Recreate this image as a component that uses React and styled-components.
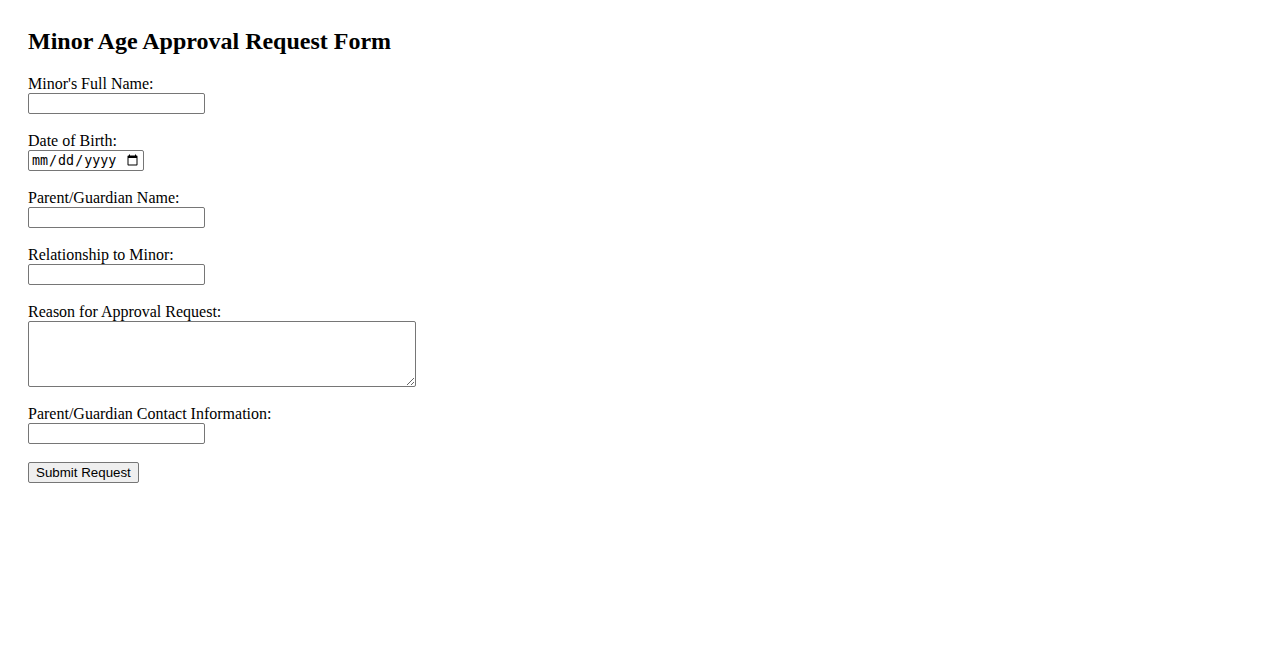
import React from "react"
import styled, { createGlobalStyle } from "styled-components"

const GlobalStyle = createGlobalStyle`
    body {
        margin: 0;
        background: #fff;
        color: #000;
        font-family: "Liberation Serif", "Times New Roman", serif;
        font-size: 16px;
    }
`

const Page = styled.div`
    padding: 28px 28px;
`

const Title = styled.h2`
    margin: 0 0 19px;
    font-size: 24px;
    font-weight: bold;
    line-height: 27.6px;
`

const Form = styled.form`
    display: flex;
    flex-direction: column;
    align-items: flex-start;
`

const Field = styled.div`
    display: flex;
    flex-direction: column;
    align-items: flex-start;
    margin-bottom: 17.6px;
`

const Label = styled.label`
    display: block;
    line-height: 18.4px;
`

const TextInput = styled.input`
    box-sizing: border-box;
    width: ${(p) => p.$width || 177}px;
    height: 21px;
    margin: 0;
    padding: 1px 2px;
    border: 1px solid #767676;
    border-radius: 2px;
    background: #fff;
    font-size: 13.33px;
`

const TextArea = styled.textarea`
    box-sizing: border-box;
    width: 388px;
    height: 66px;
    margin: 0;
    padding: 2px;
    border: 1px solid #767676;
    border-radius: 2px;
    font-family: monospace;
    font-size: 13.33px;
`

const SubmitButton = styled.button`
    box-sizing: border-box;
    height: 21px;
    padding: 1px 7px;
    border: 1px solid #767676;
    border-radius: 2px;
    background: #efefef;
    color: #000;
    font-family: "Liberation Sans", Arial, sans-serif;
    font-size: 13.33px;
`

const App = () => (
    <>
        <GlobalStyle />
        <Page>
            <Title>Minor Age Approval Request Form</Title>
            <Form onSubmit={(e) => e.preventDefault()}>
                <Field>
                    <Label htmlFor="minorName">Minor's Full Name:</Label>
                    <TextInput id="minorName" type="text" />
                </Field>
                <Field>
                    <Label htmlFor="dob">Date of Birth:</Label>
                    <TextInput id="dob" type="date" $width={116} />
                </Field>
                <Field>
                    <Label htmlFor="guardianName">Parent/Guardian Name:</Label>
                    <TextInput id="guardianName" type="text" />
                </Field>
                <Field>
                    <Label htmlFor="relationship">Relationship to Minor:</Label>
                    <TextInput id="relationship" type="text" />
                </Field>
                <Field>
                    <Label htmlFor="reason">Reason for Approval Request:</Label>
                    <TextArea id="reason" />
                </Field>
                <Field>
                    <Label htmlFor="contact">Parent/Guardian Contact Information:</Label>
                    <TextInput id="contact" type="text" />
                </Field>
                <SubmitButton type="submit">Submit Request</SubmitButton>
            </Form>
        </Page>
    </>
)

export default App
